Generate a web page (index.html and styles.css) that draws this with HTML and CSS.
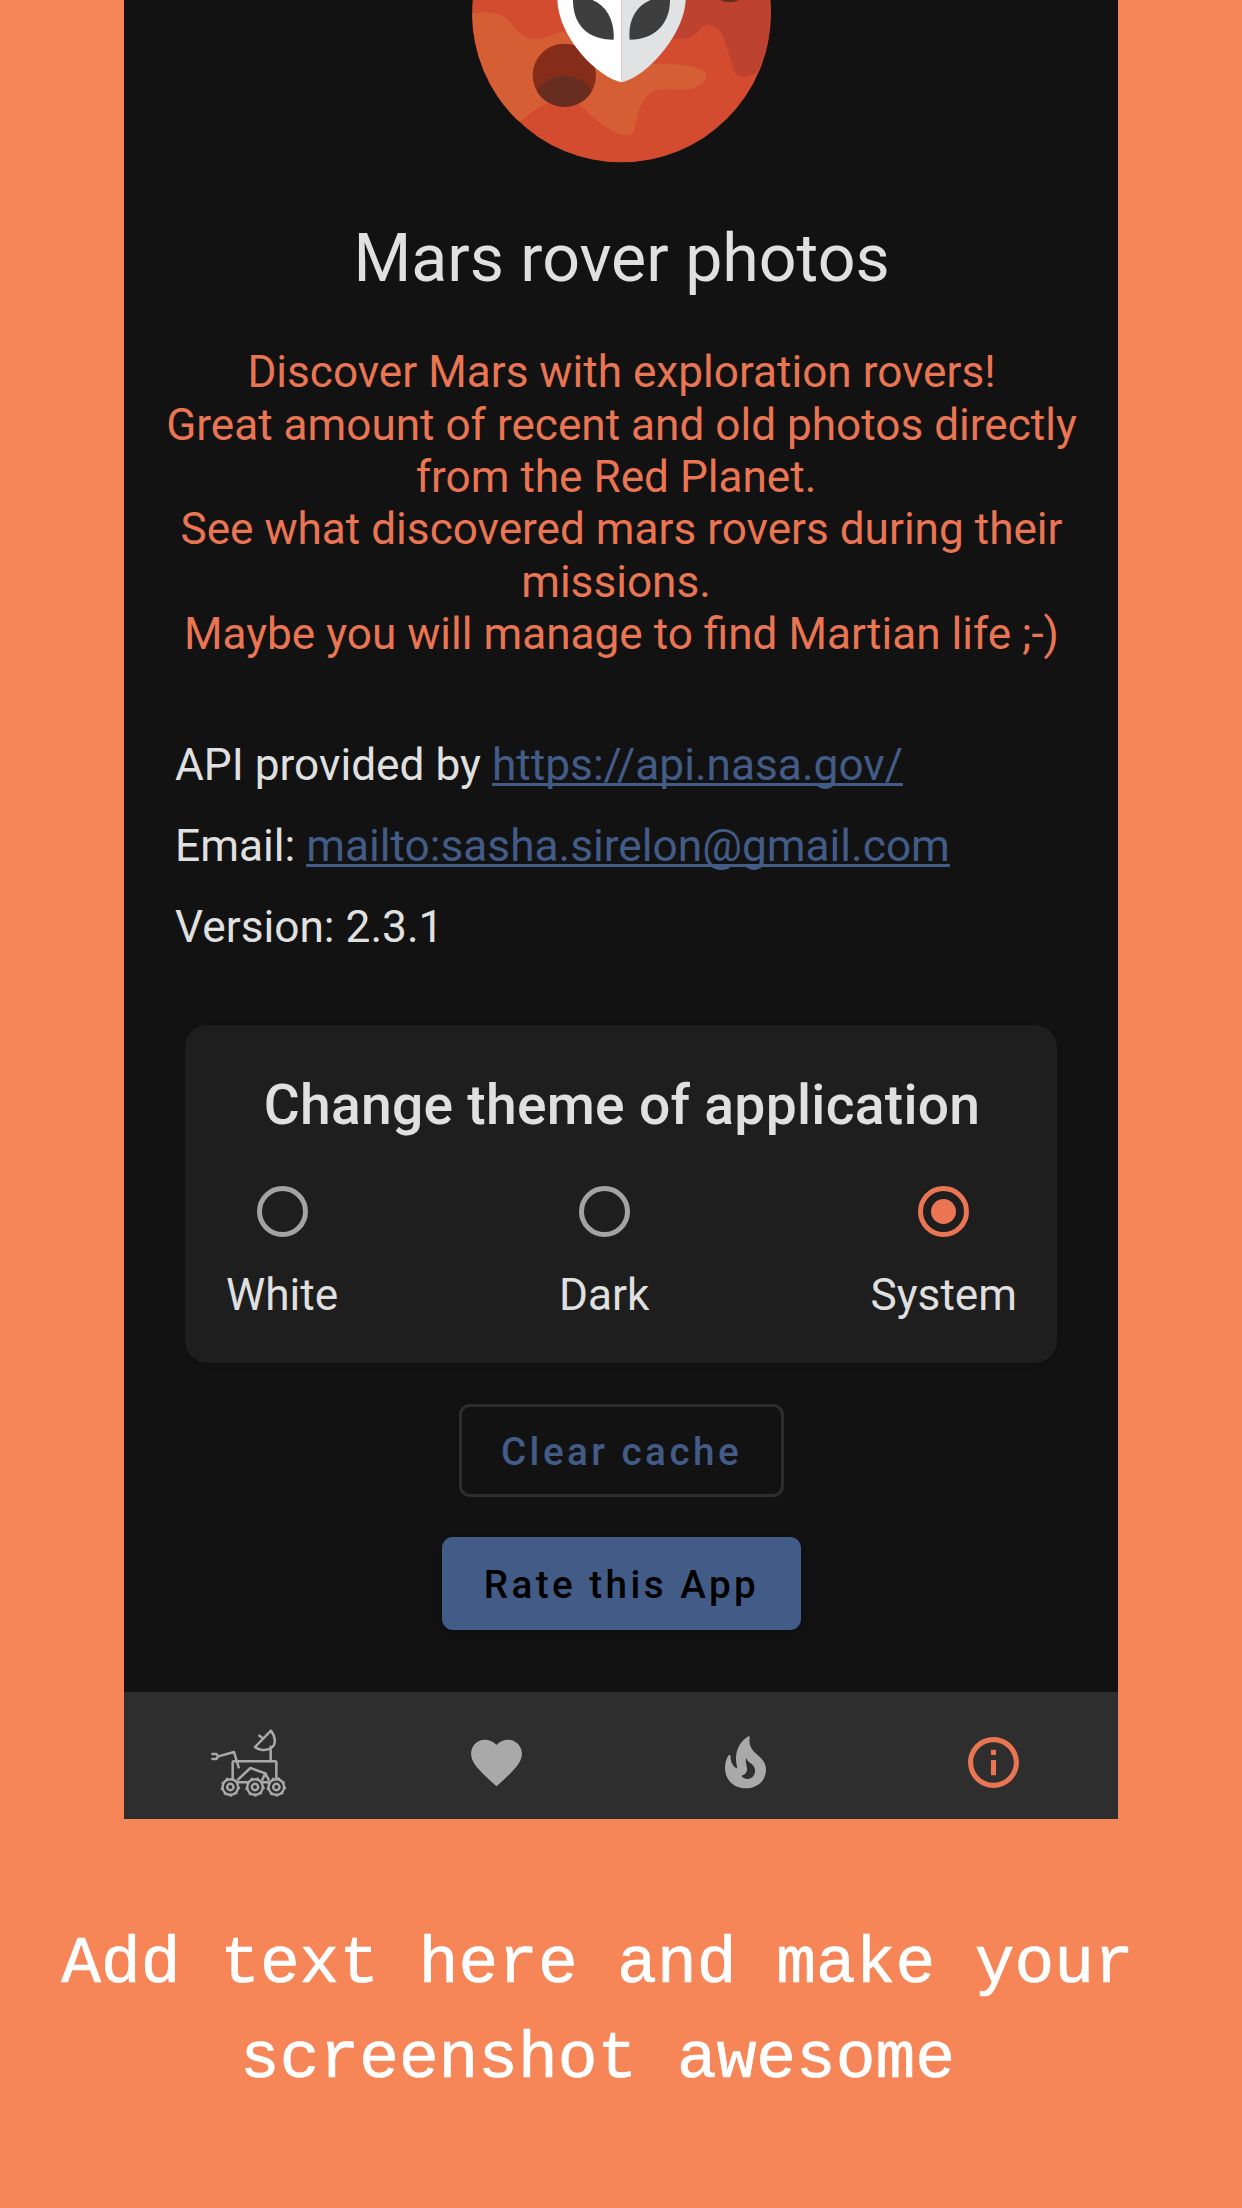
FILE: index.html
```html
<!DOCTYPE html>
<html lang="en">
<head>
<meta charset="utf-8">
<title>Mars rover photos</title>
<link rel="stylesheet" href="styles.css">
</head>
<body>
<main class="phone">
  <section class="content">
    <svg class="planet" viewBox="0 0 1020 540" aria-hidden="true">
      <defs><clipPath id="globe"><circle cx="514.500" cy="39" r="448"/></clipPath></defs>
      <g clip-path="url(#globe)">
        <rect width="1020" height="540" fill="#d34c2f"/>
        <path d="M680 -5H1020V180L925 215C898 232 867 237 856 220C840 193 832 112 800 84C785 71 762 72 748 89C730 112 715 118 670 115Z" fill="#be4230"/>
        <path d="M60 40C115 35 150 34 180 67C208 99 220 115 250 116C290 117 310 100 350 92L480 200L600 193C650 188 725 192 757 211C778 222 769 239 753 252C708 286 655 256 612 274C551 305 563 397 542 406C510 411 460 378 431 353C404 330 390 306 360 300C300 297 265 318 210 364L120 400L0 200Z" fill="#d65e35"/>
        <circle cx="343" cy="226" r="95" fill="#852d19"/>
        <path d="M261 274C301 211 385 211 425 274C390 336 298 336 261 274Z" fill="#662d20"/>
        <ellipse cx="839" cy="-20" rx="43" ry="27" fill="#662d20"/>
      </g>
      <path d="M322 -10C319 108 442 232 514 247V-10Z" fill="#fefefe"/>
      <path d="M707 -10C710 98 589 232 514 247V-10Z" fill="#e0e2e3"/>
      <path d="M369 -5C367 70 408 119 491 119C495 60 467 8 412 -5ZM660 -5C662 68 618 119 539 119C533 61 560 8 618 -5Z" fill="#3e3e3e"/>
    </svg>
    <h1 class="title">Mars rover photos</h1>
    <p class="intro">Discover Mars with exploration rovers!<br>Great amount of recent and old photos directly<br>from the Red Planet.&nbsp;<br>See what discovered mars rovers during their<br>missions.&nbsp;<br>Maybe you will manage to find Martian life ;-)</p>
    <div class="info">
      <p>API provided by <a href="#">https://api.nasa.gov/</a></p>
      <p>Email: <a href="#">mailto:sasha.sirelon@gmail.com</a></p>
      <p>Version: 2.3.1</p>
    </div>
    <section class="card">
      <h2 class="card-title">Change theme of application</h2>
      <div class="options">
        <div class="option"><span class="radio"></span><span>White</span></div>
        <div class="option"><span class="radio"></span><span>Dark</span></div>
        <div class="option"><span class="radio checked"></span><span>System</span></div>
      </div>
    </section>
    <button class="btn outlined">Clear cache</button>
    <button class="btn filled">Rate this App</button>
  </section>
  <nav class="nav">
    <a class="tab"><svg class="rover" viewBox="0 0 270 240" fill="none" stroke="currentColor" stroke-width="7.500" stroke-linejoin="round" stroke-linecap="round">
      <path d="M22 93H34L40 100L34 108H22M40 100L87 87L101 133M197 71V115M163 38L174 46M150 72L198 23C214 44 213 68 197 75C181 85 161 82 150 72Z"/>
      <path d="M83 167V119Q83 115 87 115H210Q214 115 214 119V167M99 170L136 135L181 151L191 170M181 151L172 170M99 178H127M172 178H190"/>
      <circle cx="76" cy="192" r="23.500"/><circle cx="150" cy="192" r="23.500"/><circle cx="214" cy="192" r="23.500"/>
      <g stroke-width="5" stroke-dasharray="6 12.850" stroke-linecap="butt"><circle cx="76" cy="192" r="27"/><circle cx="150" cy="192" r="27"/><circle cx="214" cy="192" r="27"/></g>
      <circle cx="76" cy="192" r="9.500"/><circle cx="150" cy="192" r="9.500"/><circle cx="214" cy="192" r="9.500"/>
    </svg></a>
    <a class="tab"><svg class="icon" viewBox="0 0 24 24"><path fill="currentColor" d="M12 21.350l-1.450-1.320C5.400 15.360 2 12.280 2 8.500 2 5.420 4.420 3 7.500 3c1.740 0 3.410.81 4.500 2.090C13.090 3.810 14.760 3 16.500 3 19.580 3 22 5.420 22 8.500c0 3.780-3.400 6.860-8.550 11.540L12 21.350z"/></svg></a>
    <a class="tab"><svg class="flame" viewBox="0 0 180 195"><path fill="currentColor" fill-rule="evenodd" d="M98 20C102 17 105 19 104 24C100 51 116 65 131 78C145 90 153 102 153 120C153 151 127 175 92 175C56 175 30 149 30 115C30 101 33 87 40 77C43 73 47 75 47 79C46 94 53 109 65 115C68 115 67 113 66 110C57 75 68 39 98 20ZM94 84C88 97 101 114 94 127C91 132 85 136 79 138C89 150 107 149 115 138C123 128 121 116 115 107C108 98 97 96 94 84Z"/></svg></a>
    <a class="tab active"><svg class="icon" viewBox="0 0 24 24"><path fill="currentColor" d="M11 7h2v2h-2zm0 4h2v6h-2zm1-9C6.480 2 2 6.480 2 12s4.480 10 10 10 10-4.480 10-10S17.520 2 12 2zm0 18c-4.410 0-8-3.590-8-8s3.590-8 8-8 8 3.590 8 8-3.590 8-8 8z"/></svg></a>
  </nav>
</main>
<p class="caption">Add text here and make your<br>screenshot awesome</p>
</body>
</html>
```
FILE: styles.css
```css
* { box-sizing: border-box; }
body {
  margin: 0;
  width: 1242px;
  height: 2208px;
  overflow: hidden;
  background: #f68658;
  font-family: Roboto, sans-serif;
}
h1, h2, p { margin: 0; font-weight: 400; }
.phone {
  display: flex;
  flex-direction: column;
  width: 994px;
  height: 1819px;
  margin-left: 124px;
  background: #121212;
  color: #e0e0e0;
}
.content {
  flex: 1;
  display: flex;
  flex-direction: column;
  align-items: center;
  min-height: 0;
}
.planet { width: 340px; height: 180px; flex: none; margin-right: 2px; }
.title { margin-top: 40px; padding-left: 1px; font-size: 66.270px; line-height: 78px; }
.intro {
  margin-top: 48.200px;
  padding-left: 1px;
  font-size: 44.130px;
  line-height: 52.400px;
  text-align: center;
  white-space: nowrap;
  color: #ea7552;
}
.info {
  align-self: stretch;
  margin-top: 64.500px;
  padding-left: 51px;
  font-size: 44.220px;
  line-height: 80.700px;
}
.info a {
  color: #425c87;
  text-decoration-thickness: 3px;
  text-underline-offset: 3px;
  text-decoration-skip-ink: none;
}
.card {
  width: 872px;
  height: 338px;
  margin-top: 58.200px;
  padding: 47px 40px 0 41px;
  border-radius: 22px;
  background: #1e1e1e;
  box-shadow: 0 2px 5px rgba(0, 0, 0, 0.2);
}
.card-title {
  padding-left: 1px;
  font-size: 55.200px;
  font-weight: 500;
  line-height: 66px;
  letter-spacing: 0.280px;
  text-align: center;
}
.options { display: flex; justify-content: space-between; margin-top: 48px; }
.option {
  display: flex;
  flex-direction: column;
  align-items: center;
  gap: 32px;
  font-size: 44.180px;
  line-height: 52px;
}
.radio {
  display: flex;
  width: 51px;
  height: 51px;
  border: 5px solid #a3a3a3;
  border-radius: 50%;
}
.radio.checked { border-color: #ea7552; }
.radio.checked::after {
  content: "";
  width: 25px;
  height: 25px;
  margin: auto;
  border-radius: 50%;
  background: #ea7552;
}
.btn {
  padding: 2px 0 0 1px;
  border: 0;
  border-radius: 11px;
  height: 93px;
  font: 500 38.650px/91px Roboto, sans-serif;
  letter-spacing: 3.450px;
}
.outlined {
  width: 325px;
  margin-top: 40.300px;
  padding-top: 3px;
  border: 3px solid #2e2e2e;
  line-height: 84px;
  background: none;
  color: #425c87;
}
.filled {
  width: 359px;
  margin-top: 40.500px;
  background: #425c87;
  color: #000;
  box-shadow: 0 3px 6px rgba(0, 0, 0, 0.25);
}
.nav {
  display: grid;
  grid-template-columns: repeat(4, 1fr);
  height: 127px;
  padding-top: 14px;
  background: #2e2e2e;
}
.tab { display: flex; align-items: center; justify-content: center; color: #a9a9a9; }
.tab.active { color: #ea7552; }
.icon { width: 61px; height: 61px; }
.flame { width: 60px; height: 65px; }
.rover { width: 90px; height: 80px; margin-left: 3px; }
.caption {
  width: 1195px;
  margin-top: 98px;
  font: 66.200px/95px "Liberation Mono", monospace;
  -webkit-text-stroke: 0.700px #fff;
  text-align: center;
  color: #fff;
}
```
